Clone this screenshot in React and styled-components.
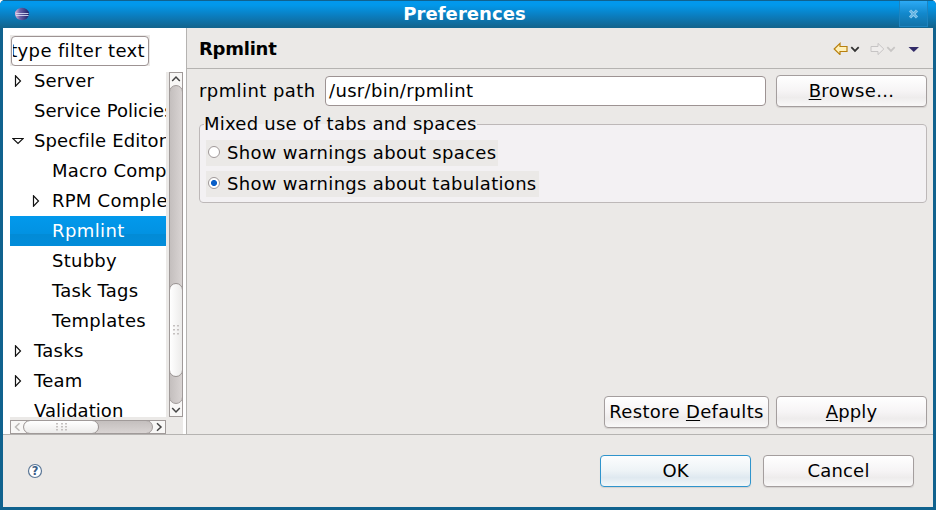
import React from "react";
import styled, { createGlobalStyle, css } from "styled-components";

const Global = createGlobalStyle`
  * { box-sizing: border-box; }
  body { margin: 0; overflow: hidden; background: #fff; }
`;

const Window = styled.div`
  width: 936px;
  height: 510px;
  display: flex;
  flex-direction: column;
  background: #10628e;
  border-radius: 5px 5px 0 0;
  overflow: hidden;
  font: 18px/30px "DejaVu Sans", sans-serif;
  letter-spacing: 0.33px;
  color: #000;
  white-space: nowrap;
`;

const TitleBar = styled.header`
  height: 28px;
  flex: none;
  display: grid;
  grid-template-columns: 47px 1fr 47px;
  border-top: 1px solid #10628e;
  background: linear-gradient(#0298ee 0, #0298ea 4px, #0a7fc2 14px, #12658f 26px);
`;

const AppIcon = styled.svg`
  width: 16px;
  height: 14px;
  margin: 6px 0 0 14px;
`;

const Title = styled.h1`
  margin: 0;
  padding-right: 7px;
  font-size: 18px;
  line-height: 26px;
  letter-spacing: 0.05px;
  text-align: center;
  color: #fff;
`;

const CloseButton = styled.button`
  width: 29px;
  height: 26px;
  margin-left: 10px;
  padding: 0;
  border: 1px solid #1d84c0;
  border-width: 0 1px 1px;
  background: linear-gradient(#2caaf5, #1288cc 50%, #1272a8);
  display: grid;
  place-items: center;
`;

const Body = styled.div`
  flex: none;
  height: 479px;
  margin: 0 3px;
  display: flex;
  flex-direction: column;
  background: #ebe9e7;
`;

const Panes = styled.div`
  height: 407px;
  display: flex;
  border-bottom: 1px solid #b5b3b1;
`;

const Sidebar = styled.aside`
  width: 184px;
  padding: 7px 0 0 7px;
  border-right: 1px solid #b5b3b1;
  background: #fff;
`;

const FilterFrame = styled.div`
  width: 140px;
  height: 31px;
  padding: 1px 1px 0 1px;
  background: #ebe9e7;
`;

const FilterField = styled.div`
  height: 30px;
  border: 1px solid #9d9393;
  border-radius: 4px;
  background: #fff;
  line-height: 28px;
`;

const FilterText = styled.div`
  display: flex;
  justify-content: flex-end;
  margin: 0 3px 0 1px;
  letter-spacing: 0.36px;
  overflow: hidden;
`;

const TreeArea = styled.div`
  display: grid;
  grid-template-columns: 156px 17px;
  grid-template-rows: 351px 17px;
  background: #ebe9e7;
  width: 173px;
`;

const Tree = styled.ul`
  margin: 0;
  padding: 0;
  list-style: none;
  overflow: hidden;
  background: #fff;
`;

const TreeRow = styled.li`
  height: 30px;
  display: flex;
  align-items: center;
  padding-left: ${(p) => (p.$level ? 20 : 2)}px;
  letter-spacing: ${(p) => p.$spacing ?? 0.26}px;
  ${(p) =>
    p.$selected &&
    css`
      color: #fff;
      background: linear-gradient(#0299ec, #0292e2 60%, #028bd6 61%, #028cda);
    `}
`;

const Twisty = styled.svg`
  flex: none;
  width: 12px;
  height: 12px;
  margin-right: 10px;
  fill: none;
  stroke: #111;
`;

const VScroll = styled.div`
  margin-top: 6px;
  padding-left: 3px;
  background: #ebe9e7;
  box-shadow: 0 -6px 0 #fff;
`;

const VTrack = styled.div`
  width: 14px;
  height: 345px;
  border: 1px solid #a09a99;
  display: flex;
  flex-direction: column;
  background: #f8f7f6;
`;

const HScroll = styled.div`
  width: 156px;
  height: 14px;
  margin-top: 3px;
  border: 1px solid #a09a99;
  display: flex;
  background: #f8f7f6;
`;

const Groove = styled.div`
  flex: 1;
  display: flex;
  overflow: hidden;
  margin: ${(p) => (p.$vertical ? "0 -1px" : "-1px 0")};
  border: 1px solid #a09a99;
  border-radius: 7px;
  padding: ${(p) => (p.$vertical ? "198px 0 0" : 0)};
  background: linear-gradient(${(p) => (p.$vertical ? "90deg" : "180deg")}, #c4bfbe, #d9d4d3);
`;

const Thumb = styled.div`
  display: grid;
  place-items: center;
  flex: none;
  width: ${(p) => (p.$vertical ? 14 : 76)}px;
  height: ${(p) => (p.$vertical ? 94 : 14)}px;
  margin: -1px;
  border: 1px solid #989291;
  border-radius: 7px;
  background: linear-gradient(${(p) => (p.$vertical ? "90deg" : "180deg")}, #fff, #ecebea);
`;

const ScrollStep = styled.svg`
  flex: none;
  width: 12px;
  height: 12px;
  fill: none;
  stroke: ${(p) => (p.$disabled ? "#bbb8b6" : "#444")};
  stroke-width: 1.5;
`;

const Page = styled.main`
  flex: 1;
  display: flex;
  flex-direction: column;
`;

const PageHeader = styled.div`
  height: 41px;
  flex: none;
  display: flex;
  align-items: center;
  justify-content: space-between;
  padding: 0 13px 0 12px;
  border-bottom: 1px solid #b5b3b1;
`;

const PageTitle = styled.h2`
  margin: 2px 0 0;
  font-size: 18px;
  letter-spacing: -0.25px;
`;

const NavIcons = styled.svg`
  width: 88px;
  height: 14px;
`;

const PathRow = styled.div`
  display: grid;
  grid-template-columns: 126px 441px 161px;
  align-items: center;
  margin: 6px 0 0 12px;
`;

const PathLabel = styled.span`
  letter-spacing: 0.42px;
`;

const PathField = styled.div`
  height: 30px;
  padding-left: 3px;
  border: 1px solid #9d9393;
  border-radius: 4px;
  background: #fff;
  line-height: 28px;
`;

const ButtonCell = styled.div`
  display: flex;
  padding-left: 10px;
`;

const Button = styled.button`
  width: ${(p) => p.$width || 151}px;
  height: 32px;
  padding: 0;
  border: 1px solid ${(p) => (p.$primary ? "#2f94cc" : "#a49e9e")};
  border-radius: 4px;
  font: inherit;
  letter-spacing: ${(p) => p.$spacing ?? 0.33}px;
  line-height: 28px;
  color: #000;
  background: ${(p) =>
    p.$primary
      ? "linear-gradient(#fcfdfe, #edf3f6 50%, #dfe9f0 72%, #f2f7f9)"
      : "linear-gradient(#fff, #f6f4f5 50%, #eeecec 72%, #f9f8f8)"};
  box-shadow: 0 1px 1px #d4d1cf;
`;

const Key = styled.span`
  text-decoration: underline;
  text-decoration-thickness: 1px;
  text-underline-offset: 2px;
`;

const Group = styled.fieldset`
  width: 728px;
  height: 89px;
  margin: 7px 0 0 12px;
  min-width: 0;
  padding: 0 0 0 6px;
  border: 1px solid #bdb8b8;
  border-radius: 4px;
  background: #f3f1f3;
`;

const Legend = styled.legend`
  height: 20px;
  margin-left: -2px;
  padding: 0;
  line-height: 20px;
  letter-spacing: 0.24px;
`;

const RadioList = styled.div`
  padding-top: 6px;
`;

const Radio = styled.label`
  display: flex;
  align-items: center;
  width: ${(p) => p.$width}px;
  height: 26px;
  margin-bottom: 5px;
  padding-left: 2px;
  gap: 7px;
  letter-spacing: 0.31px;
  background: #ebe9e7;
`;

const Dot = styled.span`
  width: 12px;
  height: 12px;
  margin-bottom: 2px;
  border: 1px solid #a09999;
  border-radius: 50%;
  background: ${(p) =>
    p.$checked ? "radial-gradient(circle, #0a5fc8 2.7px, #fff 3.3px)" : "#fff"};
`;

const PageActions = styled.div`
  display: flex;
  gap: 7px;
  justify-content: flex-end;
  margin: auto 6px 6px 0;
`;

const Footer = styled.footer`
  flex: 1;
  display: flex;
  align-items: center;
  gap: 12px;
  padding: 0 19px 0 24px;
`;

const Help = styled.svg`
  width: 16px;
  height: 16px;
  margin-right: auto;
`;

const HelpMark = styled.text`
  font: bold 11.5px "DejaVu Sans", sans-serif;
  letter-spacing: 0;
  fill: #3a5d86;
`;

const rows = [
  { label: "Server", state: "closed", spacing: 0.15 },
  { label: "Service Policies", spacing: 0.05 },
  { label: "Specfile Editor", state: "open", spacing: 0.13 },
  { label: "Macro Completions", level: 1, spacing: 0.2 },
  { label: "RPM Completions", level: 1, state: "closed", spacing: 0.25 },
  { label: "Rpmlint", level: 1, selected: true, spacing: 0.4 },
  { label: "Stubby", level: 1 },
  { label: "Task Tags", level: 1, spacing: 0.2 },
  { label: "Templates", level: 1 },
  { label: "Tasks", state: "closed" },
  { label: "Team", state: "closed" },
  { label: "Validation", spacing: 0.05 },
];

const gripDots = {
  vertical: [0, 4].flatMap((x) => [0, 4, 8].map((y) => [x, y])),
  horizontal: [0, 5, 9].flatMap((x) => [0, 3, 6].map((y) => [x, y])),
};

function Grip({ vertical }) {
  const dots = vertical ? gripDots.vertical : gripDots.horizontal;
  return (
    <svg width={vertical ? 6 : 11} height={vertical ? 10 : 8} fill="#c4c0bf">
      {dots.map(([x, y]) => (
        <rect key={`${x}-${y}`} x={x} y={y} width="2" height="1.5" />
      ))}
    </svg>
  );
}

export default function App() {
  return (
    <Window>
      <Global />
      <TitleBar>
        <AppIcon viewBox="0 0 16 14">
          <defs>
            <linearGradient id="orb" x2="1">
              <stop offset="0" stopColor="#e3b9d6" />
              <stop offset=".35" stopColor="#6a62a8" />
              <stop offset="1" stopColor="#1d2268" />
            </linearGradient>
          </defs>
          <ellipse cx="8" cy="7" rx="7" ry="6.2" fill="url(#orb)" />
          <path d="M2 6.5h12.5M2 8.5h12.5" stroke="#d5dcf2" strokeWidth=".9" />
        </AppIcon>
        <Title>Preferences</Title>
        <CloseButton aria-label="Close">
          <svg width="11" height="10" viewBox="0 0 11 10">
            <path d="M2 1.5l7 7M9 1.5l-7 7" stroke="#8ccbf0" strokeWidth="3" />
            <path d="M2 1.5l7 7M9 1.5l-7 7" stroke="#3e9bd0" strokeWidth=".8" />
          </svg>
        </CloseButton>
      </TitleBar>
      <Body>
        <Panes>
          <Sidebar>
            <FilterFrame>
              <FilterField>
                <FilterText>type filter text</FilterText>
              </FilterField>
            </FilterFrame>
            <TreeArea>
              <Tree>
                {rows.map((r) => (
                  <TreeRow
                    key={r.label}
                    $level={r.level}
                    $selected={r.selected}
                    $spacing={r.spacing}
                  >
                    <Twisty viewBox="0 0 12 12">
                      {r.state === "closed" && <path d="M3.5 .8v10.4L8.5 6z" strokeWidth="1.2" />}
                      {r.state === "open" && <path d="M.8 3.5h10.4L6 8.5z" strokeWidth="1.2" />}
                    </Twisty>
                    {r.label}
                  </TreeRow>
                ))}
              </Tree>
              <VScroll>
                <VTrack>
                  <ScrollStep viewBox="0 0 12 12">
                    <path d="M2.2 8L6 4l3.8 4" />
                  </ScrollStep>
                  <Groove $vertical>
                    <Thumb $vertical>
                      <Grip vertical />
                    </Thumb>
                  </Groove>
                  <ScrollStep viewBox="0 0 12 12">
                    <path d="M2.2 4L6 8l3.8-4" />
                  </ScrollStep>
                </VTrack>
              </VScroll>
              <HScroll>
                <ScrollStep $disabled viewBox="0 0 12 12">
                  <path d="M8.5 2.2l-4 3.8 4 3.8" />
                </ScrollStep>
                <Groove>
                  <Thumb>
                    <Grip />
                  </Thumb>
                </Groove>
                <ScrollStep viewBox="0 0 12 12">
                  <path d="M4 2.2L8 6 4 9.8" />
                </ScrollStep>
              </HScroll>
            </TreeArea>
          </Sidebar>
          <Page>
            <PageHeader>
              <PageTitle>Rpmlint</PageTitle>
              <NavIcons viewBox="0 0 88 14">
                <path d="M2.2 8l5.8-5.6v3.1h7v5h-7v3.1z" fill="#fff0b8" stroke="#b8800f" strokeWidth="1.2" />
                <path d="M19.3 6.2l3.7 3.7 3.7-3.7" fill="none" stroke="#333" strokeWidth="1.8" />
                <path d="M51.8 8L46 2.4v3.1h-7v5h7v3.1z" fill="#efedec" stroke="#c6c4c4" />
                <path d="M55.3 6.2l3.7 3.7 3.7-3.7" fill="none" stroke="#c8c6c5" strokeWidth="1.8" />
                <path d="M76.5 6h10.5l-5.2 5z" fill="#322b68" />
              </NavIcons>
            </PageHeader>
            <PathRow>
              <PathLabel>rpmlint path</PathLabel>
              <PathField>/usr/bin/rpmlint</PathField>
              <ButtonCell>
                <Button>
                  <Key>B</Key>rowse...
                </Button>
              </ButtonCell>
            </PathRow>
            <Group>
              <Legend>Mixed use of tabs and spaces</Legend>
              <RadioList>
                <Radio $width={292}>
                  <Dot />
                  Show warnings about spaces
                </Radio>
                <Radio $width={333}>
                  <Dot $checked />
                  Show warnings about tabulations
                </Radio>
              </RadioList>
            </Group>
            <PageActions>
              <Button $width={165}>
                Restore <Key>D</Key>efaults
              </Button>
              <Button $spacing={0.1}>
                <Key>A</Key>pply
              </Button>
            </PageActions>
          </Page>
        </Panes>
        <Footer>
          <Help viewBox="0 0 16 16">
            <circle cx="8" cy="8" r="6.5" fill="#fff" stroke="#5b7796" strokeWidth="1.2" />
            <HelpMark x="4.7" y="12.2">?</HelpMark>
          </Help>
          <Button $primary $spacing={0}>OK</Button>
          <Button $spacing={0.2}>Cancel</Button>
        </Footer>
      </Body>
    </Window>
  );
}
